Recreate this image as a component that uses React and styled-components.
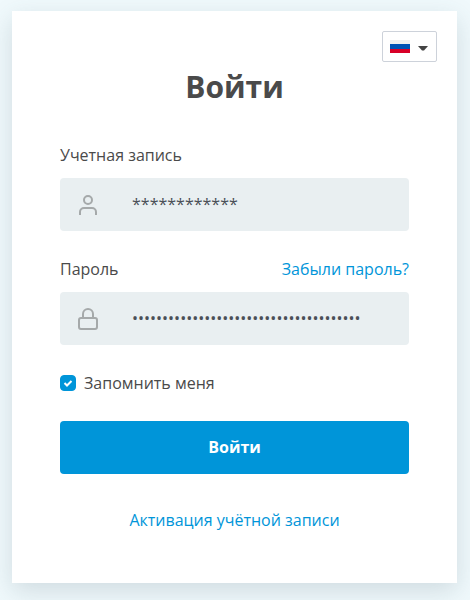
import React from "react";
import styled, { createGlobalStyle } from "styled-components";

const GlobalStyle = createGlobalStyle`
  *, *::before, *::after { box-sizing: border-box; }
  body {
    margin: 0;
    background: #f0f9fc;
    color: #4a4a4a;
    font-family: "Open Sans", "Noto Sans", sans-serif;
    font-size: 16px;
    line-height: 24px;
  }
`;

const Page = styled.main`
  min-height: 100vh;
  padding: 11px 13px 17px 12px;
`;

const Card = styled.section`
  position: relative;
  padding: 56px 48px 51px;
  background: #fff;
  box-shadow: 0 8px 24px rgba(60, 90, 100, 0.18);
`;

const Language = styled.button`
  position: absolute;
  top: 20px;
  right: 20px;
  display: flex;
  align-items: center;
  gap: 8px;
  height: 31px;
  padding: 0 8px 0 7px;
  border: 1px solid #cdd2da;
  border-radius: 2px;
  background: #fff;
  cursor: pointer;
`;

const Title = styled.h1`
  margin: 0 0 36px;
  font-size: 30px;
  line-height: 40px;
  font-weight: 700;
  text-align: center;
`;

const Field = styled.div`
  margin-bottom: 26px;
`;

const FieldHead = styled.div`
  display: flex;
  justify-content: space-between;
  margin-bottom: 11px;
`;

const Link = styled.a`
  color: #0095d9;
  text-decoration: none;
`;

const InputBox = styled.div`
  display: flex;
  align-items: center;
  height: 53px;
  padding-left: 16px;
  gap: 32px;
  border-radius: 4px;
  background: #e9eff1;
  color: #a5a9aa;
`;

const Input = styled.input`
  flex: 1;
  min-width: 0;
  height: 100%;
  padding: 0 0 2px;
  border: 0;
  outline: 0;
  background: transparent;
  color: #4a4f57;
  font: inherit;
`;

const Remember = styled.label`
  display: flex;
  align-items: center;
  gap: 8px;
  margin-bottom: 26px;
`;

const CheckWrap = styled.span`
  display: grid;
  width: 16px;
  height: 16px;

  > * {
    grid-area: 1 / 1;
  }

  svg {
    pointer-events: none;
    visibility: hidden;
  }

  input:checked + svg {
    visibility: visible;
  }
`;

const Checkbox = styled.input`
  appearance: none;
  width: 16px;
  height: 16px;
  margin: 0;
  border: 1px solid #0095d9;
  border-radius: 4px;
  background: #fff;

  &:checked {
    background: #0095d9;
  }
`;

const Submit = styled.button`
  display: block;
  width: 100%;
  height: 53px;
  padding: 0 0 2px;
  border: 0;
  border-radius: 4px;
  background: #0095d9;
  color: #fff;
  font: inherit;
  font-weight: 700;
  cursor: pointer;
`;

const Footer = styled.p`
  margin: 34px 0 0;
  text-align: center;
`;

const FlagIcon = () => (
  <svg width="20" height="13" viewBox="0 0 20 13" aria-hidden="true">
    <path fill="#f0f0f0" d="M0 0h20v4H0z" />
    <path fill="#0052b4" d="M0 4h20v5H0z" />
    <path fill="#d80027" d="M0 9h20v4H0z" />
  </svg>
);

const CaretIcon = () => (
  <svg width="10" height="9" viewBox="0 0 10 9" aria-hidden="true">
    <path fill="#444" d="M0 4h10L6 8.5H4z" />
  </svg>
);

const UserIcon = () => (
  <svg width="24" height="24" viewBox="0 0 24 24" fill="none" stroke="currentColor" strokeWidth="2" aria-hidden="true">
    <circle cx="12" cy="7" r="4" />
    <path d="M4 22v-3a4 4 0 0 1 4-4h8a4 4 0 0 1 4 4v3" />
  </svg>
);

const LockIcon = () => (
  <svg width="24" height="24" viewBox="0 0 24 24" fill="none" stroke="currentColor" strokeWidth="2" aria-hidden="true">
    <rect x="3" y="11" width="18" height="11" rx="2" />
    <path d="M7 11V7a5 5 0 0 1 10 0v4" />
  </svg>
);

const CheckIcon = () => (
  <svg width="16" height="16" viewBox="0 0 16 16" fill="none" stroke="#fff" strokeWidth="2" aria-hidden="true">
    <path d="M4.5 8l2.5 2.5L11.5 6" />
  </svg>
);

export default function App() {
  return (
    <>
      <GlobalStyle />
      <Page>
        <Card>
          <Language type="button" aria-label="Русский">
            <FlagIcon />
            <CaretIcon />
          </Language>
          <Title>Войти</Title>
          <form>
            <Field>
              <FieldHead>
                <label htmlFor="login">Учетная запись</label>
              </FieldHead>
              <InputBox>
                <UserIcon />
                <Input id="login" type="text" defaultValue="************" />
              </InputBox>
            </Field>
            <Field>
              <FieldHead>
                <label htmlFor="password">Пароль</label>
                <Link href="#forgot">Забыли пароль?</Link>
              </FieldHead>
              <InputBox>
                <LockIcon />
                <Input id="password" type="password" defaultValue="12345678901234567890123456789012345678" />
              </InputBox>
            </Field>
            <Remember htmlFor="remember">
              <CheckWrap>
                <Checkbox id="remember" type="checkbox" defaultChecked />
                <CheckIcon />
              </CheckWrap>
              Запомнить меня
            </Remember>
            <Submit type="button">Войти</Submit>
          </form>
          <Footer>
            <Link href="#activate">Активация учётной записи</Link>
          </Footer>
        </Card>
      </Page>
    </>
  );
}
